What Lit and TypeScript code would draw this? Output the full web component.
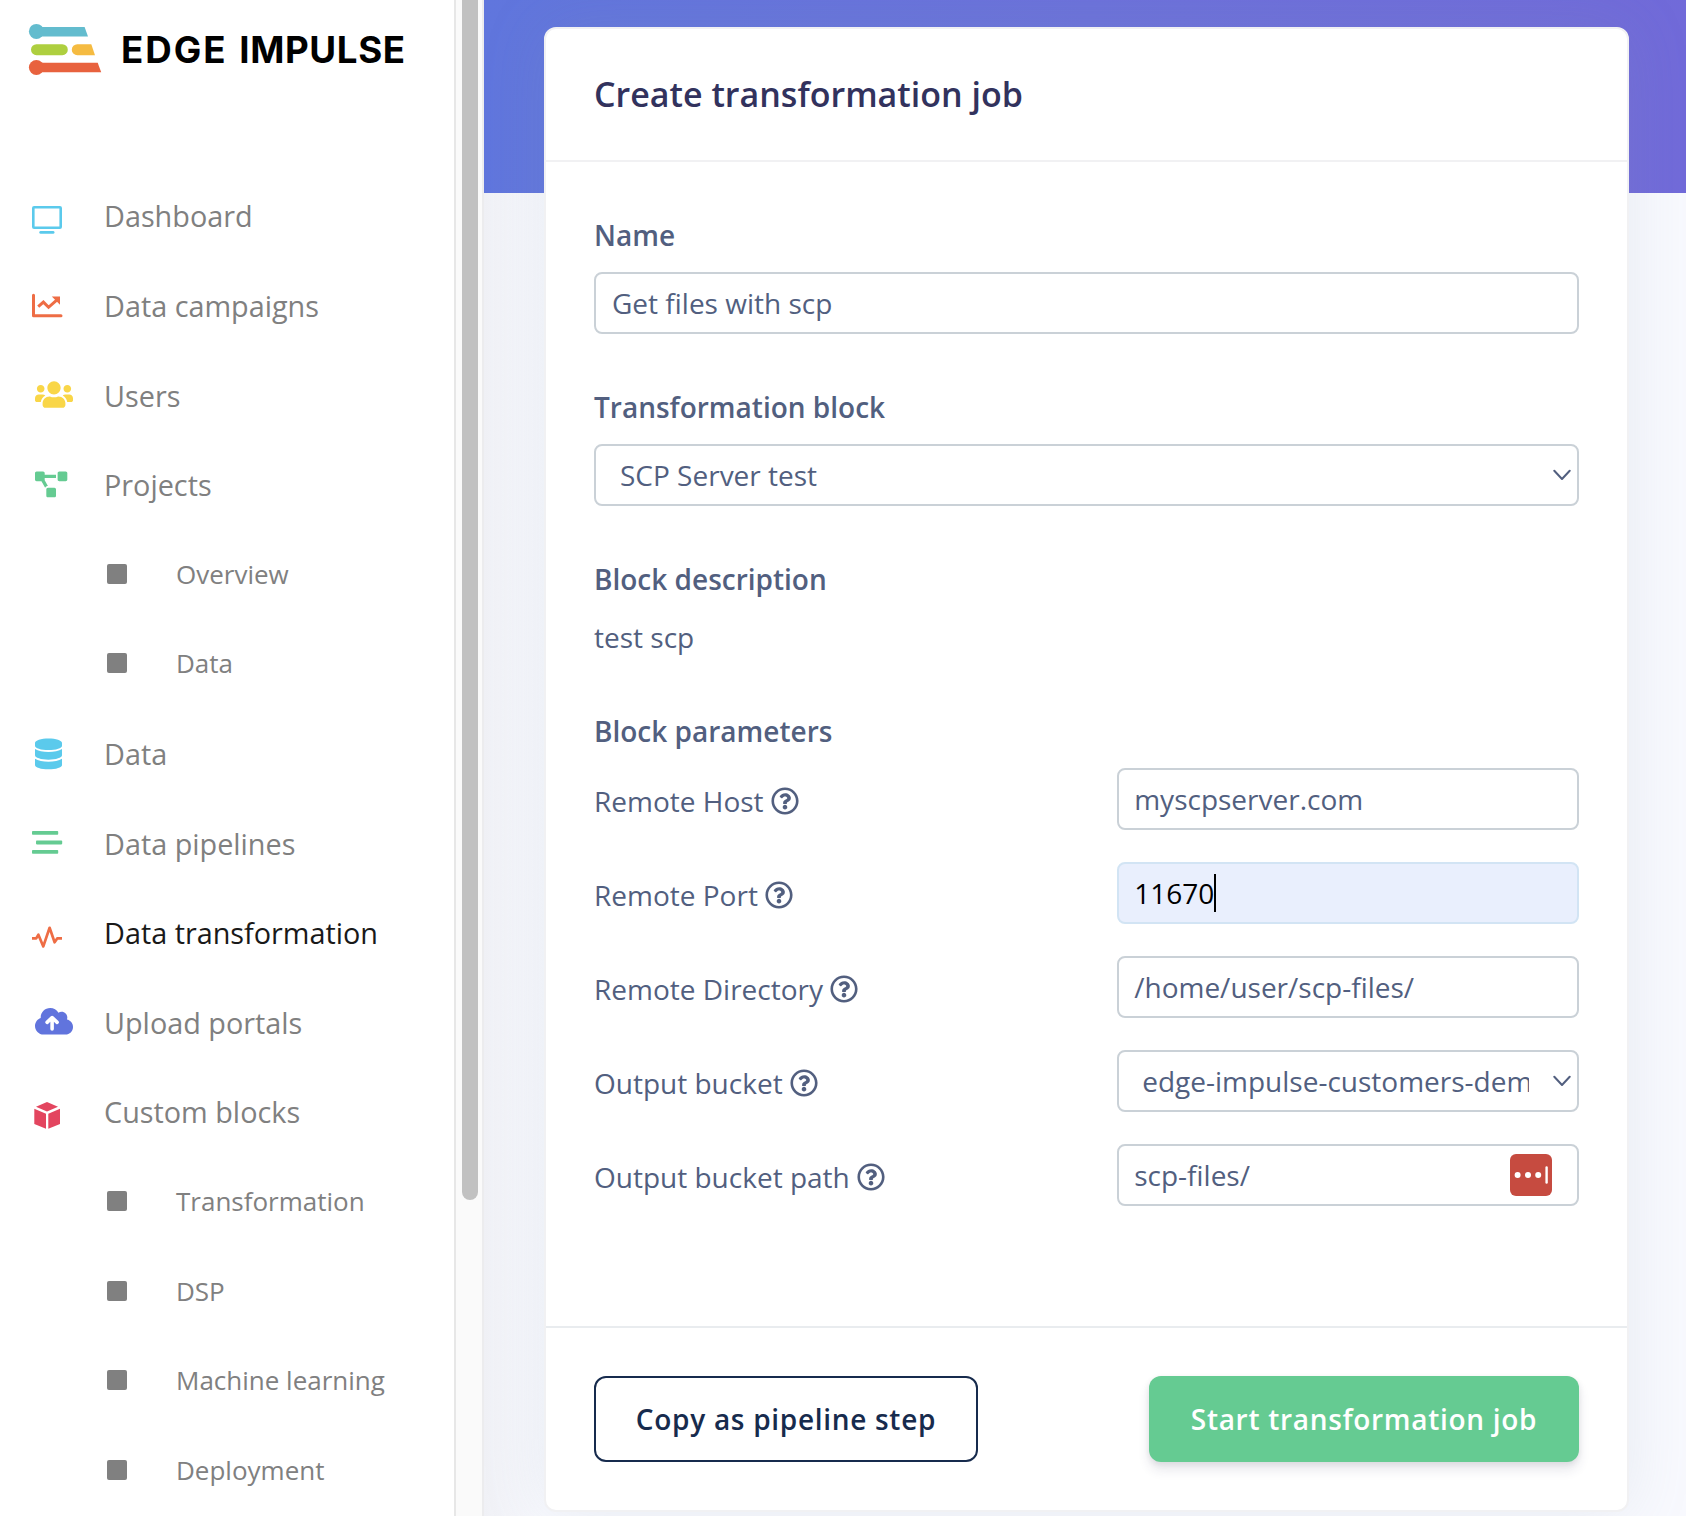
import { LitElement, html, css, svg, nothing } from "lit";
import { customElement, property } from "lit/decorators.js";

const icons: Record<string, any> = {
  dashboard: svg`<svg class="icon" viewBox="28 194 48 44">
    <rect x="33.3" y="207.3" width="27.4" height="20.4" rx="0.8" fill="none" stroke="#5bcaec" stroke-width="2.6"/>
    <rect x="39.3" y="231" width="15.2" height="2.8" rx="1.4" fill="#5bcaec"/></svg>`,
  campaigns: svg`<svg class="icon" viewBox="28 283.7 48 44" fill="none" stroke="#ee6d45" stroke-width="3">
    <path d="M33.5 295V315.4H61" stroke-linejoin="round" stroke-linecap="round"/>
    <path d="M38.2 306.4L43.4 301.8L48.6 307L57 299.5"/>
    <path d="M51.8 296.3H60V304.4Z" fill="#ee6d45" stroke="none"/></svg>`,
  users: svg`<svg class="icon" viewBox="28 373.5 48 44"><path transform="translate(35 379.8) scale(.0594)" fill="#f9d648" d="M96 224c35.3 0 64-28.7 64-64s-28.7-64-64-64-64 28.7-64 64 28.7 64 64 64zm448 0c35.3 0 64-28.7 64-64s-28.7-64-64-64-64 28.7-64 64 28.7 64 64 64zm32 32h-64c-17.6 0-33.5 7.1-45.1 18.6 40.3 22.1 68.9 62 75.1 109.4h66c17.7 0 32-14.3 32-32v-32c0-35.3-28.7-64-64-64zm-256 0c61.9 0 112-50.1 112-112S381.9 32 320 32 208 82.1 208 144s50.1 112 112 112zm76.8 32h-8.3c-20.8 10-43.9 16-68.5 16s-47.6-6-68.5-16h-8.3C179.6 288 128 339.6 128 403.2V432c0 26.5 21.5 48 48 48h288c26.5 0 48-21.5 48-48v-28.8c0-63.6-51.6-115.2-115.2-115.2zm-223.7-13.4C161.5 263.1 145.6 256 128 256H64c-35.3 0-64 28.7-64 64v32c0 17.7 14.3 32 32 32h65.9c6.3-47.4 34.9-87.3 75.2-109.4z"/></svg>`,
  projects: svg`<svg class="icon" viewBox="28 462.9 48 44"><path transform="translate(35 471.4) scale(.0505)" fill="#65cb92" d="M384 320H256c-17.67 0-32 14.33-32 32v128c0 17.67 14.33 32 32 32h128c17.67 0 32-14.33 32-32V352c0-17.67-14.33-32-32-32zM192 32c0-17.67-14.33-32-32-32H32C14.33 0 0 14.33 0 32v128c0 17.67 14.33 32 32 32h95.72l73.16 128.04C211.98 300.98 232.4 288 256 288h.28L192 175.51V128h224V64H192V32zM608 0H480c-17.67 0-32 14.33-32 32v128c0 17.67 14.33 32 32 32h128c17.67 0 32-14.33 32-32V32c0-17.67-14.33-32-32-32z"/></svg>`,
  database: svg`<svg class="icon" viewBox="28 731.9 48 44"><path transform="translate(35 738.4) scale(.0603)" fill="#5bcaec" d="M448 73.143v45.714C448 159.143 347.667 192 224 192S0 159.143 0 118.857V73.143C0 32.857 100.333 0 224 0s224 32.857 224 73.143zM448 176v102.857C448 319.143 347.667 352 224 352S0 319.143 0 278.857V176c48.125 33.143 136.208 48.572 224 48.572S399.874 209.143 448 176zm0 160v102.857C448 479.143 347.667 512 224 512S0 479.143 0 438.857V336c48.125 33.143 136.208 48.572 224 48.572S399.874 369.143 448 336z"/></svg>`,
  pipelines: svg`<svg class="icon" viewBox="28 821.3 48 44" fill="#65cb92">
    <rect x="32" y="831.3" width="26.2" height="3.8" rx="0.8"/><rect x="36" y="840.9" width="26.2" height="3.8" rx="0.8"/><rect x="32" y="850.2" width="26.2" height="3.8" rx="0.8"/></svg>`,
  pulse: svg`<svg class="icon" viewBox="28 910.9 48 44"><path d="M32 938.3H36.2L38.4 934.6L43.3 946.3L49.6 927.7L54.6 942.2L57.2 938.3H62" fill="none" stroke="#ee6d45" stroke-width="2.7" stroke-linejoin="round"/></svg>`,
  cloud: svg`<svg class="icon" viewBox="28 1000.5 48 44"><g transform="translate(35 1006.6) scale(.0594)">
    <path fill="#6174dd" d="M144 480C64.5 480 0 415.5 0 336c0-62.8 40.2-116.2 96.2-135.9c-.1-2.7-.2-5.4-.2-8.1c0-88.4 71.6-160 160-160c59.3 0 111 32.2 138.7 80.2C409.9 102 428.3 96 448 96c53 0 96 43 96 96c0 12.2-2.3 23.8-6.4 34.6C596 238.4 640 290.1 640 352c0 70.7-57.3 128-128 128H144z"/>
    <path d="M288 385V200M203 274L288 192L373 274" fill="none" stroke="#fff" stroke-width="60" stroke-linecap="round" stroke-linejoin="round"/></g></svg>`,
  cube: svg`<svg class="icon" viewBox="28 1090.1 48 44" fill="#e3455f">
    <path d="M47 1102.2L58 1106.8L47 1111.6L36 1106.8Z"/><path d="M34.3 1108.9L46 1113.8V1128.9L34.3 1124.2Z"/><path d="M60 1108.9L48.3 1113.8V1128.9L60 1124.2Z"/></svg>`,
};

interface NavItem {
  label: string;
  icon?: string;
  active?: boolean;
}

const navItems: NavItem[] = [
  { label: "Dashboard", icon: "dashboard" },
  { label: "Data campaigns", icon: "campaigns" },
  { label: "Users", icon: "users" },
  { label: "Projects", icon: "projects" },
  { label: "Overview" },
  { label: "Data" },
  { label: "Data", icon: "database" },
  { label: "Data pipelines", icon: "pipelines" },
  { label: "Data transformation", icon: "pulse", active: true },
  { label: "Upload portals", icon: "cloud" },
  { label: "Custom blocks", icon: "cube" },
  { label: "Transformation" },
  { label: "DSP" },
  { label: "Machine learning" },
  { label: "Deployment" },
];

@customElement("side-nav")
class SideNav extends LitElement {
  static styles = css`
    :host { display: flex; width: 484px; height: 1516px; flex: none; background: #fff; overflow: hidden; }
    .content { width: 454px; flex: none; }
    .brand { display: flex; align-items: center; height: 96px; padding-left: 24px; }
    .mark { width: 84px; height: 60px; flex: none; }
    .wordmark { margin-left: 13px; font: 700 36.7px/44px Inter, sans-serif; color: #000; white-space: nowrap; padding-top: 4px; }
    .edge { letter-spacing: 2px; margin-right: 3px; }
    .impulse { letter-spacing: 0.6px; }
    .list { display: flex; flex-direction: column; padding-top: 75.3px; }
    .item { display: flex; align-items: center; height: 89.6px; padding-left: 28px; font-size: 28.8px; line-height: 44px; color: #808080; white-space: nowrap; }
    .item .text { padding-top: 0.8px; }
    .icon { width: 48px; height: 44px; margin-right: 28px; flex: none; display: block; }
    .active { color: #191919; }
    .sub { padding-left: 107px; font-size: 26px; }
    .bullet { width: 20px; height: 20px; border-radius: 2px; background: #808080; margin-top: -1.2px; margin-right: 49px; flex: none; }
    .sub .text { margin-top: -2.1px; }
    .track { box-sizing: border-box; width: 30px; height: 1516px; flex: none; padding-left: 6px; background: #fafafa; border-left: 2px solid #e7e7e7; border-right: 2px solid #ececee; }
    .thumb { width: 16px; height: 1200px; border-radius: 0 0 8px 8px; background: #c1c1c1; }
  `;
  render() {
    return html`
      <div class="content">
        <div class="brand">
          <svg class="mark" viewBox="24 18 84 60">
            <circle cx="36.4" cy="31.4" r="7.5" fill="#63bcce"/><path d="M36 27H84.6L88 36.6H36Z" fill="#63bcce"/>
            <rect x="31" y="44.2" width="36.8" height="11" rx="5.5" fill="#aecf3f"/>
            <path d="M77.3 44.2H91.3L95 55.2H77.3A5.5 5.5 0 0 1 77.3 44.2Z" fill="#f5bb41"/>
            <circle cx="36.4" cy="67.5" r="7.5" fill="#e8623e"/><path d="M36 62.8H97.7L101.2 72.2H36Z" fill="#e8623e"/>
          </svg>
          <span class="wordmark"><span class="edge">EDGE</span> <span class="impulse">IMPULSE</span></span>
        </div>
        <nav class="list">
          ${navItems.map((item) =>
            item.icon
              ? html`<div class="item ${item.active ? "active" : ""}">${icons[item.icon]}<span class="text">${item.label}</span></div>`
              : html`<div class="item sub"><span class="bullet"></span><span class="text">${item.label}</span></div>`
          )}
        </nav>
      </div>
      <div class="track"><div class="thumb"></div></div>
    `;
  }
}

@customElement("form-field")
class FormField extends LitElement {
  @property() value = "";
  @property() kind = "input";
  @property({ type: Boolean }) focused = false;
  @property({ type: Boolean }) manager = false;

  static styles = css`
    :host { display: block; }
    .box { box-sizing: border-box; display: flex; align-items: center; height: 62px; padding: 0 16px 0 var(--field-inset, 16px); border: 2px solid #cad1d7; border-radius: 8px; background: #fff; color: #525f7f; font-size: 28px; line-height: 42px; white-space: nowrap; }
    .select { padding: 0 6px 0 calc(var(--field-inset, 16px) + 8px); }
    .value { overflow: hidden; }
    .select .value { flex: 1; margin-right: 24px; }
    .chevron { width: 18px; height: 12px; flex: none; }
    .focused { background: #e9effd; border-color: #d2e4f4; color: #000; }
    .caret { width: 2px; height: 38px; background: #000; }
    .manager { width: 42px; height: 42px; margin-left: auto; margin-right: 9px; flex: none; }
  `;
  render() {
    return html`<div class="box ${this.kind} ${this.focused ? "focused" : ""}">
      <span class="value">${this.value}</span>
      ${this.focused ? html`<span class="caret"></span>` : nothing}
      ${this.kind === "select"
        ? html`<svg class="chevron" viewBox="0 0 18 12"><path d="M1.3 1.8L9 10L16.7 1.8" fill="none" stroke="#525f7f" stroke-width="2" stroke-linecap="round" stroke-linejoin="round"/></svg>`
        : nothing}
      ${this.manager
        ? html`<svg class="manager" viewBox="0 0 42 42"><rect width="42" height="42" rx="6" fill="#c64b40"/>
            <g fill="#fff"><circle cx="7.6" cy="21" r="3"/><circle cx="18" cy="21" r="3"/><circle cx="28.2" cy="21" r="3"/><rect x="35.4" y="12.2" width="2.4" height="17.6" rx="1.2"/></g></svg>`
        : nothing}
    </div>`;
  }
}

const params = [
  { label: "Remote Host", value: "myscpserver.com", kind: "input" },
  { label: "Remote Port", value: "11670", kind: "input", focused: true },
  { label: "Remote Directory", value: "/home/user/scp-files/", kind: "input" },
  { label: "Output bucket", value: "edge-impulse-customers-demo", kind: "select" },
  { label: "Output bucket path", value: "scp-files/", kind: "input", manager: true },
];

@customElement("app-root")
class AppRoot extends LitElement {
  static styles = css`
    :host { display: flex; width: 1686px; height: 1516px; overflow: hidden; font-family: "Open Sans", sans-serif; background: #f8f9fe; }
    .main { box-sizing: border-box; flex: 1; height: 1516px; padding: 27px 57px 0 60px; overflow: hidden;
      background: linear-gradient(93deg, #6076dd 0%, #6b71da 50%, #716ad9 100%) 0 0 / 100% 193px no-repeat, linear-gradient(90deg, #f0f1f6, #f8f9fe 60px); }
    .card { box-sizing: border-box; height: 1485px; border: 2px solid #f1f1f3; border-radius: 12px; background: #fff; box-shadow: 0 0 64px rgba(136, 152, 170, 0.15); display: flex; flex-direction: column; }
    .head { box-sizing: border-box; height: 133px; flex: none; padding: 40px 48px 0; border-bottom: 2px solid #f1f1f3; font-weight: 600; font-size: 34px; line-height: 51px; color: #32325d; }
    .body { padding: 52px 48px 0; flex: 1; color: #525f7f; font-size: 28px; line-height: 42px; }
    .label { font-weight: 600; margin-bottom: 16px; }
    .group { margin-bottom: 52px; }
    .params { display: flex; flex-direction: column; gap: 32px; }
    .param { display: flex; align-items: center; justify-content: space-between; }
    .name { display: flex; align-items: center; gap: 7.4px; padding-top: 4px; }
    .help { width: 28px; height: 28px; display: block; }
    .control { width: 462px; --field-inset: 15.2px; }
    .foot { box-sizing: border-box; height: 184px; flex: none; padding: 48px 48px 0; border-top: 2px solid #e9ecef; display: flex; justify-content: space-between; }
    .button { box-sizing: border-box; height: 86px; display: flex; align-items: center; justify-content: center; border-radius: 12px; font-weight: 600; font-size: 28px; line-height: 42px; letter-spacing: 0.7px; white-space: nowrap; }
    .outline { width: 384px; border: 2px solid #172b4d; color: #172b4d; }
    .primary { width: 430px; background: #65cb92; color: #fff; box-shadow: 0 8px 12px rgba(50, 50, 93, 0.11), 0 2px 6px rgba(0, 0, 0, 0.08); }
  `;
  render() {
    return html`
      <side-nav></side-nav>
      <main class="main">
        <section class="card">
          <div class="head">Create transformation job</div>
          <div class="body">
            <div class="group"><div class="label">Name</div><form-field value="Get files with scp"></form-field></div>
            <div class="group"><div class="label">Transformation block</div><form-field kind="select" value="SCP Server test"></form-field></div>
            <div class="group"><div class="label">Block description</div><div>test scp</div></div>
            <div class="label">Block parameters</div>
            <div class="params">
              ${params.map((p) => html`<div class="param">
                <div class="name"><span>${p.label}</span><svg class="help" viewBox="0 0 512 512"><path fill="#525f7f" d="M256 8C119.043 8 8 119.083 8 256c0 136.997 111.043 248 248 248s248-111.003 248-248C504 119.083 392.957 8 256 8zm0 448c-110.532 0-200-89.431-200-200 0-110.495 89.472-200 200-200 110.491 0 200 89.471 200 200 0 110.53-89.431 200-200 200zm107.244-255.2c0 67.052-72.421 68.084-72.421 92.863V300c0 6.627-5.373 12-12 12h-45.647c-6.627 0-12-5.373-12-12v-8.659c0-35.745 27.1-50.034 47.579-61.516 17.561-9.845 28.324-16.541 28.324-29.579 0-17.246-21.999-28.693-39.784-28.693-23.189 0-33.894 10.977-48.942 29.969-4.057 5.12-11.46 6.071-16.666 2.124l-27.824-21.098c-5.107-3.872-6.251-11.066-2.644-16.363C184.846 131.491 214.94 112 261.794 112c49.071 0 101.45 38.304 101.45 88.8zM298 368c0 23.159-18.841 42-42 42s-42-18.841-42-42 18.841-42 42-42 42 18.841 42 42z"/></svg></div>
                <form-field class="control" kind=${p.kind} value=${p.value} ?focused=${p.focused} ?manager=${p.manager}></form-field>
              </div>`)}
            </div>
          </div>
          <div class="foot">
            <div class="button outline">Copy as pipeline step</div>
            <div class="button primary">Start transformation job</div>
          </div>
        </section>
      </main>
    `;
  }
}
